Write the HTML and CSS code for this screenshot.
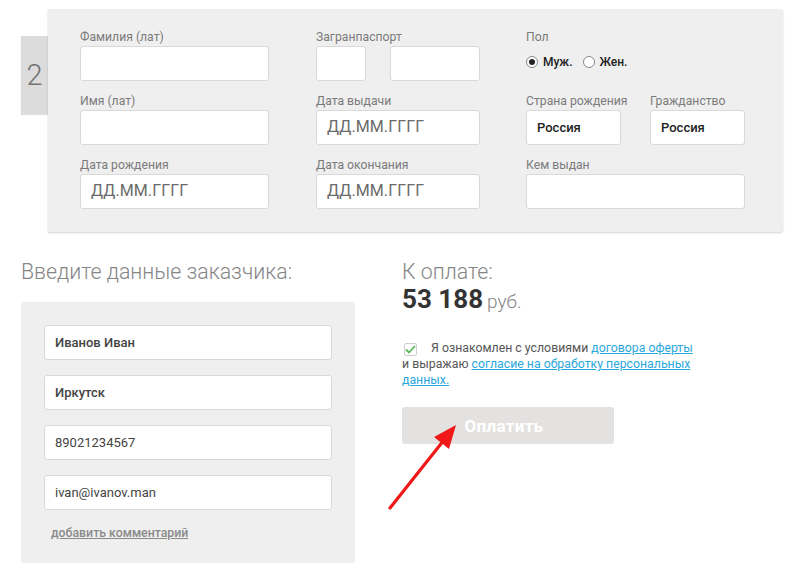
FILE: index.html
```html
<!DOCTYPE html>
<html lang="ru">
<head>
	<meta charset="UTF-8">
	<title>Оформление заказа</title>
	<link rel="stylesheet" href="styles.css">
</head>
<body>
	<main class="page">
		<section class="passenger">
			<div class="step">2</div>
			<div class="passenger-card">
				<div class="field">
					<label class="label">Фамилия (лат)</label>
					<input class="input" type="text">
				</div>
				<div class="field">
					<label class="label">Загранпаспорт</label>
					<div class="passport">
						<input class="input input-series" type="text">
						<input class="input input-number" type="text">
					</div>
				</div>
				<div class="field">
					<label class="label">Пол</label>
					<div class="gender">
						<label class="radio"><span class="radio-dot is-checked"></span>Муж.</label>
						<label class="radio"><span class="radio-dot"></span>Жен.</label>
					</div>
				</div>

				<div class="field">
					<label class="label">Имя (лат)</label>
					<input class="input" type="text">
				</div>
				<div class="field">
					<label class="label">Дата выдачи</label>
					<input class="input input-date" type="text" placeholder="ДД.ММ.ГГГГ">
				</div>
				<div class="field-pair">
					<div class="field">
						<label class="label">Страна рождения</label>
						<input class="input input-country" type="text" value="Россия">
					</div>
					<div class="field">
						<label class="label">Гражданство</label>
						<input class="input input-country" type="text" value="Россия">
					</div>
				</div>

				<div class="field">
					<label class="label">Дата рождения</label>
					<input class="input input-date" type="text" placeholder="ДД.ММ.ГГГГ">
				</div>
				<div class="field">
					<label class="label">Дата окончания</label>
					<input class="input input-date" type="text" placeholder="ДД.ММ.ГГГГ">
				</div>
				<div class="field">
					<label class="label">Кем выдан</label>
					<input class="input" type="text">
				</div>
			</div>
		</section>

		<section class="checkout">
			<div class="customer">
				<h2 class="title">Введите данные заказчика:</h2>
				<div class="customer-card">
					<input class="input input-strong" type="text" value="Иванов Иван">
					<input class="input input-strong" type="text" value="Иркутск">
					<input class="input input-plain" type="text" value="89021234567">
					<input class="input input-plain" type="text" value="ivan@ivanov.man">
					<a class="comment-link" href="#">добавить комментарий</a>
				</div>
			</div>

			<div class="payment">
				<h2 class="title">К оплате:</h2>
				<p class="total"><b>53 188</b> <span>руб.</span></p>
				<p class="agree">
					<span class="check">
						<svg width="11" height="9" viewBox="0 0 11 9"><path d="M1 4.5 L4 7.5 L10 1" fill="none" stroke="#5cb85c" stroke-width="1.8"/></svg>
					</span>Я ознакомлен с условиями <a href="#">договора оферты</a><br>и выражаю <a href="#">согласие на обработку персональных данных.</a>
				</p>
				<button class="pay" type="button">Оплатить</button>
			</div>
		</section>

		<!-- red pointer drawn on top of the page -->
		<svg class="pointer" width="90" height="100" viewBox="0 0 90 100">
			<line x1="4" y1="96" x2="58" y2="28" stroke="#f01818" stroke-width="3.2" stroke-linecap="round"/>
			<polygon points="70,13 48,25 63,37" fill="#f01818"/>
		</svg>
	</main>
</body>
</html>
```

FILE: styles.css
```css
* {
	box-sizing: border-box;
}

html, body {
	margin: 0;
	padding: 0;
	background: #fff;
}

body {
	font-family: Roboto, "Liberation Sans", Arial, sans-serif;
	color: #333;
	width: 800px;
	height: 582px;
	overflow: hidden;
}

.page {
	position: relative;
	padding: 9px 0 0 21px;
}

/* passenger block */
.passenger {
	display: flex;
	align-items: flex-start;
}

.step {
	width: 27px;
	height: 78px;
	margin-top: 27px;
	background: #dcdcdc;
	color: #727272;
	font-size: 29px;
	font-weight: 300;
	line-height: 78px;
	text-align: center;
	box-shadow: 0 1px 1px rgba(0, 0, 0, 0.12);
}

.passenger-card {
	width: 735px;
	height: 223px;
	padding: 20px 38px 0 32px;
	background: #efefef;
	border-radius: 0 3px 3px 0;
	box-shadow: 0 1px 2px rgba(0, 0, 0, 0.18);
	display: grid;
	grid-template-columns: 189px 165px 219px;
	grid-template-rows: 52px 52px 52px;
	column-gap: 46px;
	row-gap: 12px;
	align-content: start;
}

.passenger-card > .field:nth-child(3n + 2) {
	margin-left: 1px;
}

.field {
	display: flex;
	flex-direction: column;
}

.label {
	font-size: 12.2px;
	line-height: 16px;
	color: #7b7b7b;
	margin-bottom: 1px;
}

.input {
	display: block;
	width: 100%;
	height: 35px;
	margin: 0;
	padding: 0 10px;
	border: 1px solid #d9d9d9;
	border-radius: 3px;
	background: #fff;
	font-family: inherit;
	font-size: 13px;
	color: #222;
	outline: none;
}

.input-date::placeholder {
	font-size: 16px;
	color: #6a6a6a;
	letter-spacing: 0.1px;
}

.input-country {
	font-weight: 500;
	width: 95px;
}

.passport {
	display: flex;
	justify-content: space-between;
}

.input-series {
	width: 50px;
}

.input-number {
	width: 90px;
}

.gender {
	display: flex;
	align-items: center;
	gap: 10px;
	height: 31px;
}

.radio {
	display: flex;
	align-items: center;
	gap: 5px;
	font-size: 12px;
	font-weight: 500;
	color: #222;
}

.radio-dot {
	width: 12px;
	height: 12px;
	border: 1px solid #888;
	border-radius: 50%;
	background: #fff;
	position: relative;
}

.radio-dot.is-checked::after {
	content: "";
	position: absolute;
	inset: 2px;
	border-radius: 50%;
	background: #222;
}

.field-pair {
	display: flex;
	justify-content: space-between;
}

/* checkout block */
.checkout {
	display: flex;
	gap: 47px;
	margin-top: 27px;
}

.title {
	margin: 0;
	font-size: 21.3px;
	line-height: 25px;
	font-weight: 300;
	color: #858585;
}

.customer {
	width: 334px;
}

.customer .title {
	margin-bottom: 18px;
}

.customer-card {
	background: #efefef;
	border-radius: 3px;
	padding: 23px 23px 22px;
	display: flex;
	flex-direction: column;
	gap: 15px;
}

.customer-card .input {
	font-size: 13px;
	color: #444;
}

.input-strong {
	font-weight: 500;
}

.comment-link {
	margin: 0 0 0 7px;
	font-size: 12.3px;
	line-height: 16px;
	font-weight: 500;
	color: #8a8a8a;
}

.payment {
	width: 320px;
}

.total {
	margin: 0;
	line-height: 30px;
	color: #333;
}

.total b {
	font-size: 26px;
	font-weight: 700;
}

.total span {
	font-size: 19px;
	font-weight: 300;
	color: #858585;
}

.agree {
	width: 300px;
	margin: 22px 0 0;
	font-size: 12.3px;
	line-height: 16px;
	color: #555;
}

.agree a {
	color: #2aa7dc;
}

.check {
	display: inline-flex;
	align-items: center;
	justify-content: center;
	width: 13px;
	height: 13px;
	margin: 0 14px 0 2px;
	border: 1px solid #cfcfcf;
	border-radius: 2px;
	background: #fff;
	vertical-align: -2px;
}

.pay {
	display: block;
	width: 212px;
	height: 37px;
	margin-top: 19px;
	border: 0;
	border-radius: 3px;
	background: #e4e2e1;
	color: #fff;
	font-family: inherit;
	font-size: 17px;
	font-weight: 700;
	letter-spacing: 0.3px;
	padding-right: 14px;
}

.pointer {
	position: absolute;
	left: 386px;
	top: 412px;
}
```
